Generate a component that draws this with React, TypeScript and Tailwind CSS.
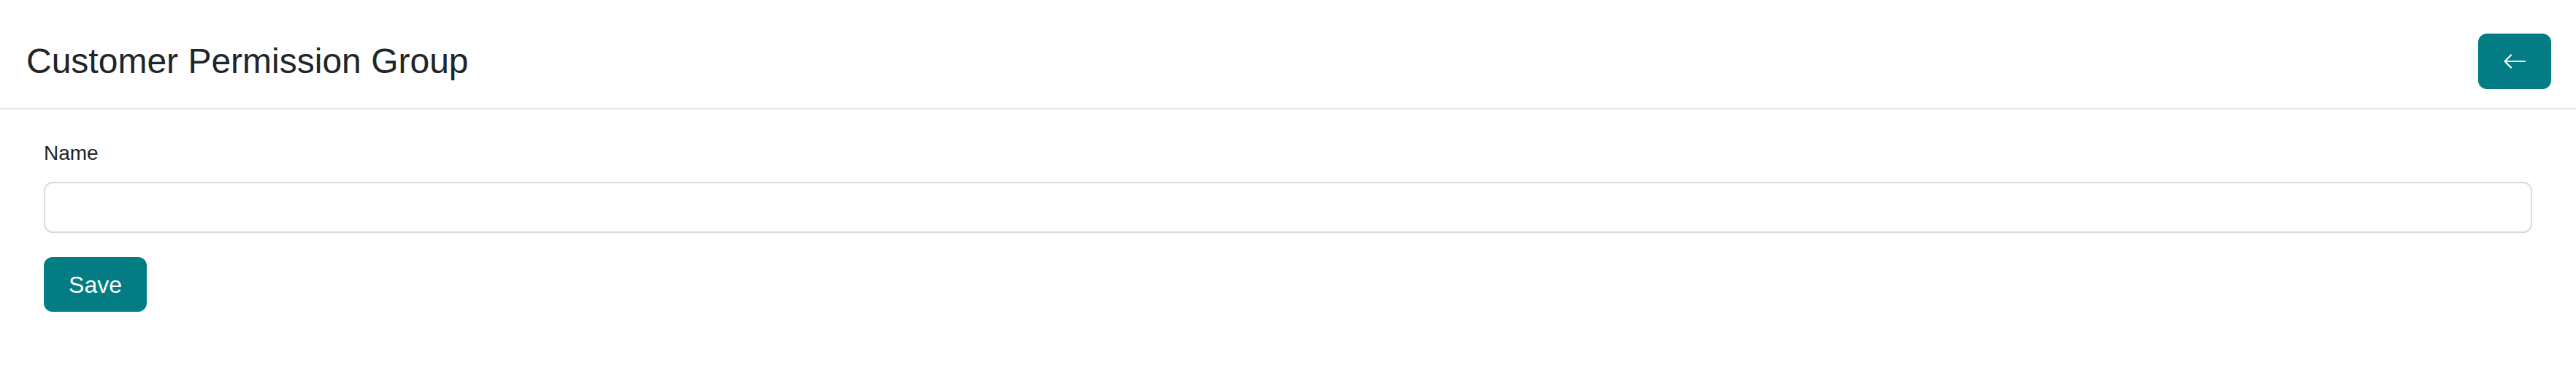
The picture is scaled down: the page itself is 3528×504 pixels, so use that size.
export default function App() {
  return (
    <div
      className="min-h-[504px] w-full bg-white text-[#212529]"
      style={{ fontFamily: '"Liberation Sans", Arial, sans-serif' }}
    >
      <div className="flex items-center justify-between border-b-2 border-[#e8e8e8] pl-[36px] pr-[34px] pt-[46px] pb-[26px]">
        <h1 className="text-[48px] leading-[57.6px] font-normal">
          Customer Permission Group
        </h1>
        <button className="flex h-[76px] w-[100px] items-center justify-center rounded-[12px] bg-[#037c84]">
          <svg width="32" height="22" viewBox="0 0 32 22" fill="none">
            <path
              d="M30 11H3M11 2.5L2.5 11L11 19.5"
              stroke="white"
              strokeWidth="2.2"
              strokeLinecap="round"
              strokeLinejoin="round"
            />
          </svg>
        </button>
      </div>

      <div className="px-[60px] pt-[40px]">
        <label className="mb-[19px] block text-[28px] leading-[40px]">
          Name
        </label>
        <input
          type="text"
          className="block h-[70px] w-full rounded-[12px] border-2 border-[#d9d9d9] bg-white px-4 text-[28px] outline-none"
        />
        <button className="mt-[33px] h-[75px] w-[141px] rounded-[12px] bg-[#037c84] text-[32px] text-white">
          Save
        </button>
      </div>
    </div>
  );
}
